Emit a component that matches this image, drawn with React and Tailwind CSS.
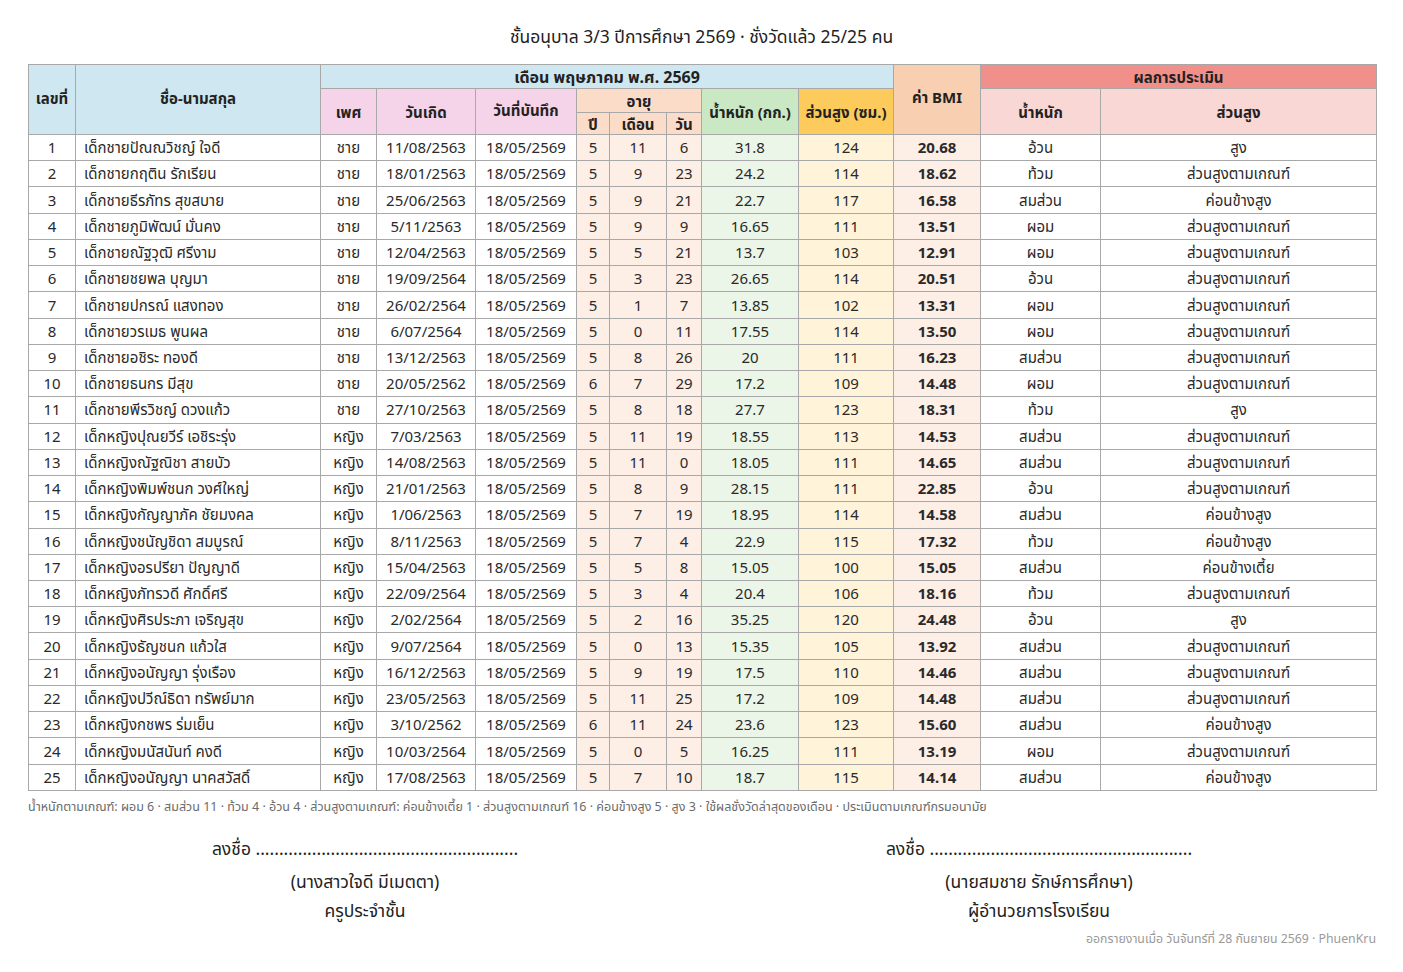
import React from 'react';

const rows = [
    [1, 'เด็กชายปัณณวิชญ์ ใจดี', 'ชาย', '11/08/2563', 5, 11, 6, '31.8', '124', '20.68', 'อ้วน', 'สูง'],
    [2, 'เด็กชายกฤติน รักเรียน', 'ชาย', '18/01/2563', 5, 9, 23, '24.2', '114', '18.62', 'ท้วม', 'ส่วนสูงตามเกณฑ์'],
    [3, 'เด็กชายธีรภัทร สุขสบาย', 'ชาย', '25/06/2563', 5, 9, 21, '22.7', '117', '16.58', 'สมส่วน', 'ค่อนข้างสูง'],
    [4, 'เด็กชายภูมิพัฒน์ มั่นคง', 'ชาย', '5/11/2563', 5, 9, 9, '16.65', '111', '13.51', 'ผอม', 'ส่วนสูงตามเกณฑ์'],
    [5, 'เด็กชายณัฐวุฒิ ศรีงาม', 'ชาย', '12/04/2563', 5, 5, 21, '13.7', '103', '12.91', 'ผอม', 'ส่วนสูงตามเกณฑ์'],
    [6, 'เด็กชายชยพล บุญมา', 'ชาย', '19/09/2564', 5, 3, 23, '26.65', '114', '20.51', 'อ้วน', 'ส่วนสูงตามเกณฑ์'],
    [7, 'เด็กชายปกรณ์ แสงทอง', 'ชาย', '26/02/2564', 5, 1, 7, '13.85', '102', '13.31', 'ผอม', 'ส่วนสูงตามเกณฑ์'],
    [8, 'เด็กชายวรเมธ พูนผล', 'ชาย', '6/07/2564', 5, 0, 11, '17.55', '114', '13.50', 'ผอม', 'ส่วนสูงตามเกณฑ์'],
    [9, 'เด็กชายอชิระ ทองดี', 'ชาย', '13/12/2563', 5, 8, 26, '20', '111', '16.23', 'สมส่วน', 'ส่วนสูงตามเกณฑ์'],
    [10, 'เด็กชายธนกร มีสุข', 'ชาย', '20/05/2562', 6, 7, 29, '17.2', '109', '14.48', 'ผอม', 'ส่วนสูงตามเกณฑ์'],
    [11, 'เด็กชายพีรวิชญ์ ดวงแก้ว', 'ชาย', '27/10/2563', 5, 8, 18, '27.7', '123', '18.31', 'ท้วม', 'สูง'],
    [12, 'เด็กหญิงปุณยวีร์ เอชิระรุ่ง', 'หญิง', '7/03/2563', 5, 11, 19, '18.55', '113', '14.53', 'สมส่วน', 'ส่วนสูงตามเกณฑ์'],
    [13, 'เด็กหญิงณัฐณิชา สายบัว', 'หญิง', '14/08/2563', 5, 11, 0, '18.05', '111', '14.65', 'สมส่วน', 'ส่วนสูงตามเกณฑ์'],
    [14, 'เด็กหญิงพิมพ์ชนก วงศ์ใหญ่', 'หญิง', '21/01/2563', 5, 8, 9, '28.15', '111', '22.85', 'อ้วน', 'ส่วนสูงตามเกณฑ์'],
    [15, 'เด็กหญิงกัญญาภัค ชัยมงคล', 'หญิง', '1/06/2563', 5, 7, 19, '18.95', '114', '14.58', 'สมส่วน', 'ค่อนข้างสูง'],
    [16, 'เด็กหญิงชนัญชิดา สมบูรณ์', 'หญิง', '8/11/2563', 5, 7, 4, '22.9', '115', '17.32', 'ท้วม', 'ค่อนข้างสูง'],
    [17, 'เด็กหญิงอรปรียา ปัญญาดี', 'หญิง', '15/04/2563', 5, 5, 8, '15.05', '100', '15.05', 'สมส่วน', 'ค่อนข้างเตี้ย'],
    [18, 'เด็กหญิงภัทรวดี ศักดิ์ศรี', 'หญิง', '22/09/2564', 5, 3, 4, '20.4', '106', '18.16', 'ท้วม', 'ส่วนสูงตามเกณฑ์'],
    [19, 'เด็กหญิงศิรประภา เจริญสุข', 'หญิง', '2/02/2564', 5, 2, 16, '35.25', '120', '24.48', 'อ้วน', 'สูง'],
    [20, 'เด็กหญิงธัญชนก แก้วใส', 'หญิง', '9/07/2564', 5, 0, 13, '15.35', '105', '13.92', 'สมส่วน', 'ส่วนสูงตามเกณฑ์'],
    [21, 'เด็กหญิงอนัญญา รุ่งเรือง', 'หญิง', '16/12/2563', 5, 9, 19, '17.5', '110', '14.46', 'สมส่วน', 'ส่วนสูงตามเกณฑ์'],
    [22, 'เด็กหญิงปวีณ์ธิดา ทรัพย์มาก', 'หญิง', '23/05/2563', 5, 11, 25, '17.2', '109', '14.48', 'สมส่วน', 'ส่วนสูงตามเกณฑ์'],
    [23, 'เด็กหญิงกชพร ร่มเย็น', 'หญิง', '3/10/2562', 6, 11, 24, '23.6', '123', '15.60', 'สมส่วน', 'ค่อนข้างสูง'],
    [24, 'เด็กหญิงมนัสนันท์ คงดี', 'หญิง', '10/03/2564', 5, 0, 5, '16.25', '111', '13.19', 'ผอม', 'ส่วนสูงตามเกณฑ์'],
    [25, 'เด็กหญิงอนัญญา นาคสวัสดิ์', 'หญิง', '17/08/2563', 5, 7, 10, '18.7', '115', '14.14', 'สมส่วน', 'ค่อนข้างสูง'],
];

// shared cell borders
const b = 'border border-[#a8a8a8]';
const th = `${b} font-bold text-[15px] leading-[18px] text-[#222] text-center align-middle p-0`;
const td = `${b} text-[15px] text-[#2a2a2a] text-center align-middle p-0 leading-none`;

const Signature = ({ name, role }) => (
    <div className="flex flex-col items-center text-[17.5px] text-[#222]">
        <div className="h-[34px] leading-[34px]">ลงชื่อ ........................................................</div>
        <div className="h-[30px] leading-[30px] mt-[1px]">({name})</div>
        <div className="h-[28px] leading-[28px]">{role}</div>
    </div>
);

const App = () => {
    return (
        <div className="w-[1403px] min-h-[972px] bg-white font-['Noto_Sans','Noto_Sans_Thai',sans-serif] px-[28px] pt-[23px]">
            <h1 className="text-center text-[17.5px] text-[#222] h-[26px] leading-[26px]">
                ชั้นอนุบาล 3/3 ปีการศึกษา 2569 · ชั่งวัดแล้ว 25/25 คน
            </h1>

            <table className="mt-[15px] w-[1348px] table-fixed border-collapse">
                <colgroup>
                    <col className="w-[47px]" />
                    <col className="w-[245px]" />
                    <col className="w-[56px]" />
                    <col className="w-[99px]" />
                    <col className="w-[101px]" />
                    <col className="w-[33px]" />
                    <col className="w-[57px]" />
                    <col className="w-[35px]" />
                    <col className="w-[97px]" />
                    <col className="w-[95px]" />
                    <col className="w-[87px]" />
                    <col className="w-[120px]" />
                    <col className="w-[276px]" />
                </colgroup>
                <thead>
                    <tr className="h-[24px]">
                        <th rowSpan={3} className={`${th} bg-[#cfe7f1] align-top pt-[24px]`}>เลขที่</th>
                        <th rowSpan={3} className={`${th} bg-[#cfe7f1] align-top pt-[24px]`}>ชื่อ-นามสกุล</th>
                        <th colSpan={8} className={`${th} bg-[#cfe7f1] text-[16px]`}>เดือน พฤษภาคม พ.ศ. 2569</th>
                        <th rowSpan={3} className={`${th} bg-[#f9cfb1] align-top pt-[23px]`}>ค่า BMI</th>
                        <th colSpan={2} className={`${th} bg-[#f1908a]`}>ผลการประเมิน</th>
                    </tr>
                    <tr className="h-[24px]">
                        <th rowSpan={2} className={`${th} bg-[#f5d3e8]`}>เพศ</th>
                        <th rowSpan={2} className={`${th} bg-[#f5d3e8]`}>วันเกิด</th>
                        <th rowSpan={2} className={`${th} bg-[#f5d3e8] align-top pt-[12px]`}>วันที่บันทึก</th>
                        <th colSpan={3} className={`${th} bg-[#fbdcc9]`}>อายุ</th>
                        <th rowSpan={2} className={`${th} bg-[#c9e8c3]`}>น้ำหนัก (กก.)</th>
                        <th rowSpan={2} className={`${th} bg-[#fdca5c]`}>ส่วนสูง (ซม.)</th>
                        <th rowSpan={2} className={`${th} bg-[#f9d7d4]`}>น้ำหนัก</th>
                        <th rowSpan={2} className={`${th} bg-[#f9d7d4]`}>ส่วนสูง</th>
                    </tr>
                    <tr className="h-[22px]">
                        <th className={`${th} bg-[#fbdcc9]`}>ปี</th>
                        <th className={`${th} bg-[#fbdcc9]`}>เดือน</th>
                        <th className={`${th} bg-[#fbdcc9]`}>วัน</th>
                    </tr>
                </thead>
                <tbody>
                    {rows.map((r) => (
                        <tr key={r[0]} className="h-[26.24px]">
                            <td className={td}>{r[0]}</td>
                            <td className={`${td} text-left pl-[8px] text-[14.5px]`}>{r[1]}</td>
                            <td className={`${td} text-[14px]`}>{r[2]}</td>
                            <td className={td}>{r[3]}</td>
                            <td className={td}>18/05/2569</td>
                            <td className={`${td} bg-[#fdeee6]`}>{r[4]}</td>
                            <td className={`${td} bg-[#fdeee6]`}>{r[5]}</td>
                            <td className={`${td} bg-[#fdeee6]`}>{r[6]}</td>
                            <td className={`${td} bg-[#ebf6e8]`}>{r[7]}</td>
                            <td className={`${td} bg-[#fff4d9]`}>{r[8]}</td>
                            <td className={`${td} bg-[#fdeee6] font-bold`}>{r[9]}</td>
                            <td className={`${td} text-[14px]`}>{r[10]}</td>
                            <td className={`${td} text-[14px]`}>{r[11]}</td>
                        </tr>
                    ))}
                </tbody>
            </table>

            <p className="mt-[8px] text-[12.5px] text-[#6b6b6b] leading-[16px]">
                น้ำหนักตามเกณฑ์: ผอม 6 · สมส่วน 11 · ท้วม 4 · อ้วน 4 · ส่วนสูงตามเกณฑ์: ค่อนข้างเตี้ย 1 · ส่วนสูงตามเกณฑ์ 16 · ค่อนข้างสูง 5 · สูง 3 · ใช้ผลชั่งวัดล่าสุดของเดือน · ประเมินตามเกณฑ์กรมอนามัย
            </p>

            <div className="mt-[16px] grid grid-cols-2 w-[1348px]">
                <Signature name="นางสาวใจดี มีเมตตา" role="ครูประจำชั้น" />
                <Signature name="นายสมชาย รักษ์การศึกษา" role="ผู้อำนวยการโรงเรียน" />
            </div>

            <p className="mt-[6px] w-[1348px] text-right text-[12.3px] text-[#9a9a9a]">
                ออกรายงานเมื่อ วันจันทร์ที่ 28 กันยายน 2569 · PhuenKru
            </p>
        </div>
    );
};

export default App;
